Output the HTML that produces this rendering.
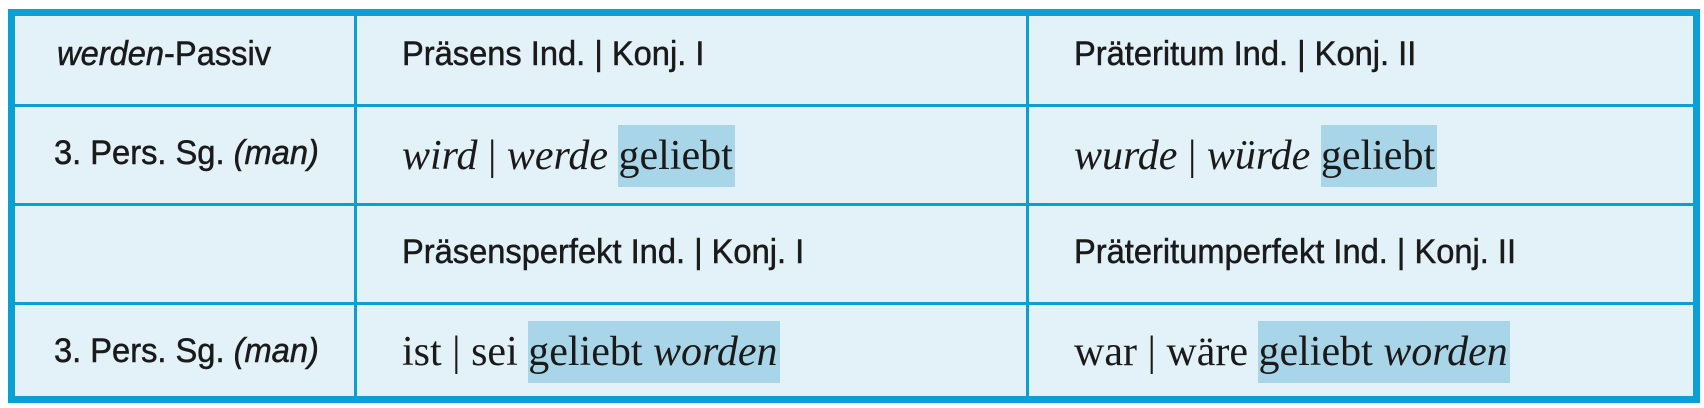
<!DOCTYPE html>
<html><head><meta charset="utf-8"><style>
html,body{margin:0;padding:0;background:#fff;}
body{width:1704px;height:408px;position:relative;overflow:hidden;}
.box{position:absolute;left:8px;top:9px;width:1678px;height:380px;border:7px solid #0aa0d3;background:#e3f1f8;}
.v{position:absolute;top:9px;height:394px;width:3px;background:#0aa0d3;}
.h{position:absolute;left:8px;width:1692px;height:3px;background:#0aa0d3;}
.t{position:absolute;font-family:"Liberation Sans",sans-serif;font-size:34px;color:#1a1a1a;white-space:nowrap;line-height:1;transform:scaleX(0.96);transform-origin:left;-webkit-text-stroke:0.5px #1a1a1a;}
.s{position:absolute;font-family:"Liberation Serif",serif;font-size:42px;color:#1a1a1a;white-space:nowrap;line-height:62px;height:62px;}
.hl{display:inline-block;background:#a9d5e8;height:62px;vertical-align:top;padding-right:2px;}
</style></head><body>
<div class="box"></div>
<div class="v" style="left:354px"></div>
<div class="v" style="left:1026px"></div>
<div class="h" style="top:104px"></div>
<div class="h" style="top:203px"></div>
<div class="h" style="top:302px"></div>

<div class="t" style="left:57px;top:37px"><i>werden</i>-Passiv</div>
<div class="t" style="left:402px;top:37px">Präsens Ind. | Konj. I</div>
<div class="t" style="left:1074px;top:37px">Präteritum Ind. | Konj. II</div>
<div class="t" style="left:54px;top:136px">3. Pers. Sg. <i>(man)</i></div>
<div class="s" style="left:402px;top:125px"><i>wird</i> | <i>werde</i> <span class="hl">geliebt</span></div>
<div class="s" style="left:1074px;top:125px"><i>wurde</i> | <i>würde</i> <span class="hl">geliebt</span></div>
<div class="t" style="left:402px;top:235px">Präsensperfekt Ind. | Konj. I</div>
<div class="t" style="left:1074px;top:235px">Präteritumperfekt Ind. | Konj. II</div>
<div class="t" style="left:54px;top:334px">3. Pers. Sg. <i>(man)</i></div>
<div class="s" style="left:402px;top:321px">ist | sei <span class="hl">geliebt <i>worden</i></span></div>
<div class="s" style="left:1074px;top:321px">war | wäre <span class="hl">geliebt <i>worden</i></span></div>
</body></html>
